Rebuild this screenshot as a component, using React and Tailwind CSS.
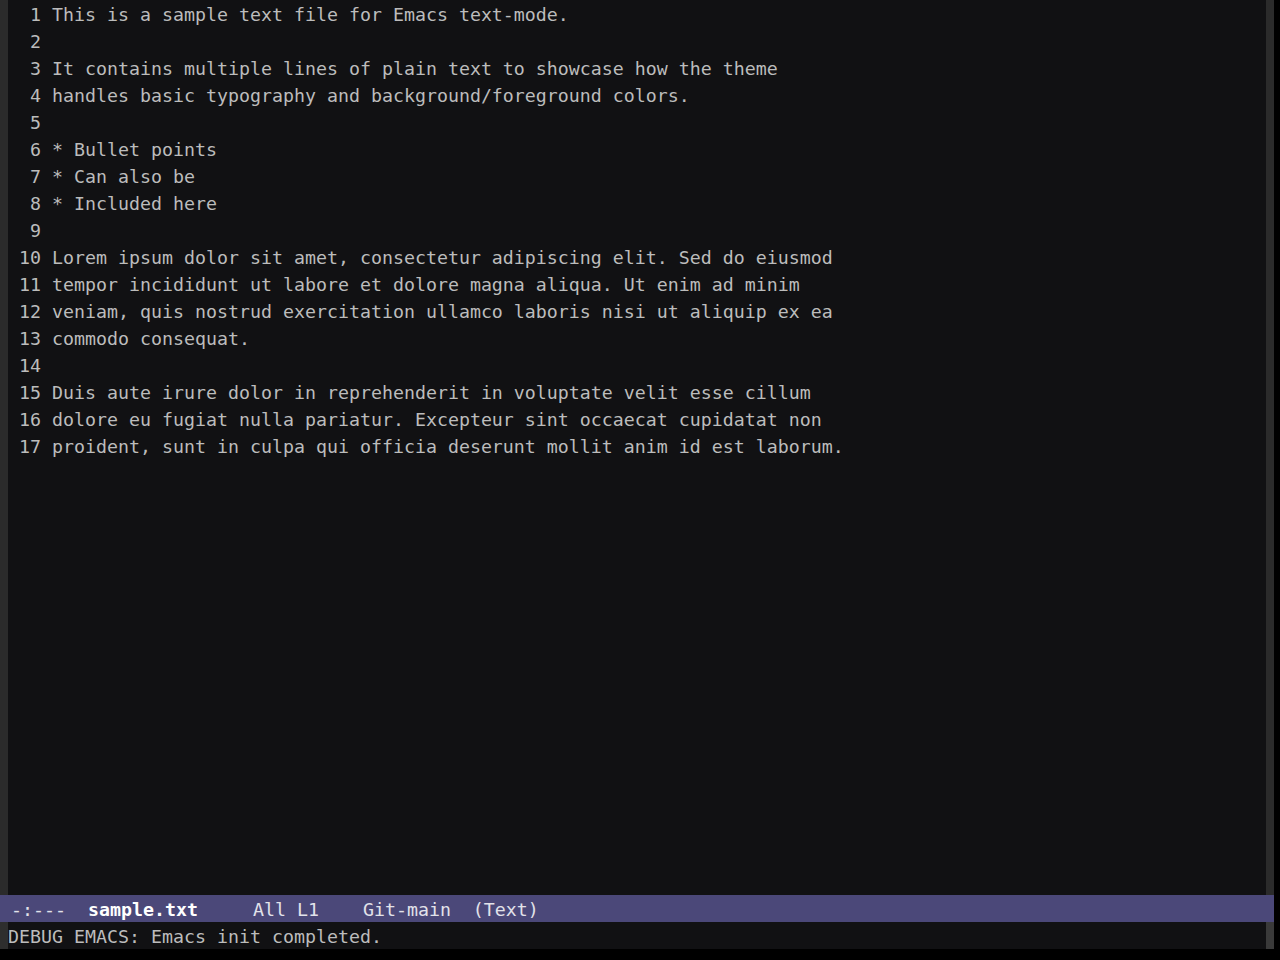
const LINES = [
  'This is a sample text file for Emacs text-mode.',
  '',
  'It contains multiple lines of plain text to showcase how the theme',
  'handles basic typography and background/foreground colors.',
  '',
  '* Bullet points',
  '* Can also be',
  '* Included here',
  '',
  'Lorem ipsum dolor sit amet, consectetur adipiscing elit. Sed do eiusmod',
  'tempor incididunt ut labore et dolore magna aliqua. Ut enim ad minim',
  'veniam, quis nostrud exercitation ullamco laboris nisi ut aliquip ex ea',
  'commodo consequat.',
  '',
  'Duis aute irure dolor in reprehenderit in voluptate velit esse cillum',
  'dolore eu fugiat nulla pariatur. Excepteur sint occaecat cupidatat non',
  'proident, sunt in culpa qui officia deserunt mollit anim id est laborum.',
]

const mono = { fontFamily: '"DejaVu Sans Mono", "Liberation Mono", monospace' }

export default function App() {
  return (
    <div
      className="w-[1280px] h-[960px] bg-black flex flex-col text-[18.27px] leading-[27px] whitespace-pre"
      style={mono}
    >
      {/* Main window */}
      <div className="w-[1274px] h-[895px] flex">
        <div className="w-[8px] bg-[#2b2b2b]" />
        <div className="flex-1 bg-[#111113] text-[#bcbcbc] pt-px">
          {LINES.map((l, i) => (
            <div key={i} className="h-[27px] flex">
              <span className="w-[44px] pl-[11px] pr-[11px] text-right">{i + 1}</span>
              <span>{l}</span>
            </div>
          ))}
        </div>
        <div className="w-[8px] bg-[#2b2b2b]" />
      </div>

      {/* Mode line */}
      <div className="w-[1274px] h-[27px] bg-[#4b4879] text-[#e2e2ea] pt-px">
        {' -:---  '}<span className="font-bold text-white">sample.txt</span>{'     All L1    Git-main  (Text)'}
      </div>

      {/* Echo area */}
      <div className="w-[1274px] h-[27px] flex">
        <div className="w-[8px] bg-[#2e2e2e]" />
        <div className="flex-1 bg-[#111113] text-[#bcbcbc] pt-px">DEBUG EMACS: Emacs init completed.</div>
        <div className="w-[8px] bg-[#3a3a3a]" />
      </div>
    </div>
  )
}
